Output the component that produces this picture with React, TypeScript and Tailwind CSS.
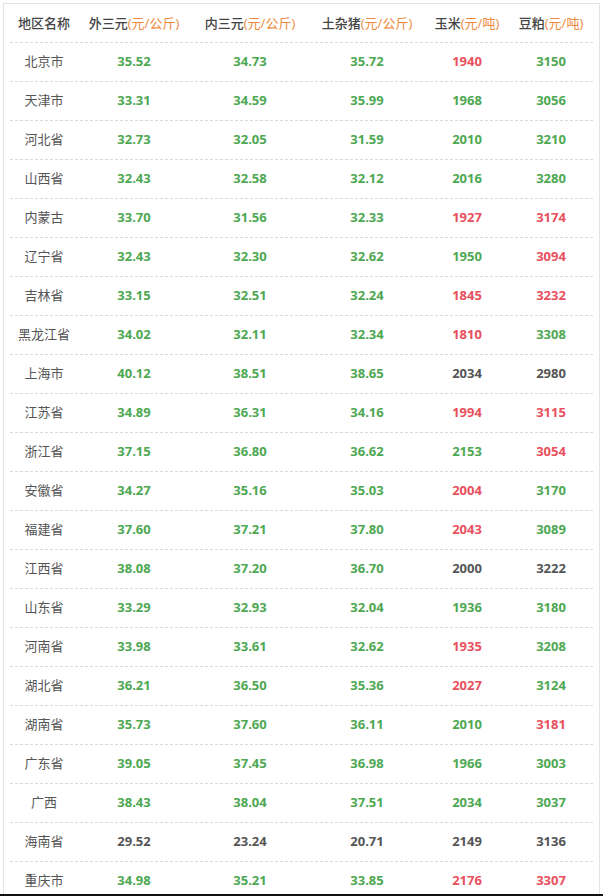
import React from 'react';

// g = green (up), r = red (down), k = flat
type Tone = 'g' | 'r' | 'k';
type Cell = [string, Tone];

const rows: { region: string; cells: Cell[] }[] = [
  { region: '北京市', cells: [['35.52', 'g'], ['34.73', 'g'], ['35.72', 'g'], ['1940', 'r'], ['3150', 'g']] },
  { region: '天津市', cells: [['33.31', 'g'], ['34.59', 'g'], ['35.99', 'g'], ['1968', 'g'], ['3056', 'g']] },
  { region: '河北省', cells: [['32.73', 'g'], ['32.05', 'g'], ['31.59', 'g'], ['2010', 'g'], ['3210', 'g']] },
  { region: '山西省', cells: [['32.43', 'g'], ['32.58', 'g'], ['32.12', 'g'], ['2016', 'g'], ['3280', 'g']] },
  { region: '内蒙古', cells: [['33.70', 'g'], ['31.56', 'g'], ['32.33', 'g'], ['1927', 'r'], ['3174', 'r']] },
  { region: '辽宁省', cells: [['32.43', 'g'], ['32.30', 'g'], ['32.62', 'g'], ['1950', 'g'], ['3094', 'r']] },
  { region: '吉林省', cells: [['33.15', 'g'], ['32.51', 'g'], ['32.24', 'g'], ['1845', 'r'], ['3232', 'r']] },
  { region: '黑龙江省', cells: [['34.02', 'g'], ['32.11', 'g'], ['32.34', 'g'], ['1810', 'r'], ['3308', 'g']] },
  { region: '上海市', cells: [['40.12', 'g'], ['38.51', 'g'], ['38.65', 'g'], ['2034', 'k'], ['2980', 'k']] },
  { region: '江苏省', cells: [['34.89', 'g'], ['36.31', 'g'], ['34.16', 'g'], ['1994', 'r'], ['3115', 'r']] },
  { region: '浙江省', cells: [['37.15', 'g'], ['36.80', 'g'], ['36.62', 'g'], ['2153', 'g'], ['3054', 'r']] },
  { region: '安徽省', cells: [['34.27', 'g'], ['35.16', 'g'], ['35.03', 'g'], ['2004', 'r'], ['3170', 'g']] },
  { region: '福建省', cells: [['37.60', 'g'], ['37.21', 'g'], ['37.80', 'g'], ['2043', 'r'], ['3089', 'g']] },
  { region: '江西省', cells: [['38.08', 'g'], ['37.20', 'g'], ['36.70', 'g'], ['2000', 'k'], ['3222', 'k']] },
  { region: '山东省', cells: [['33.29', 'g'], ['32.93', 'g'], ['32.04', 'g'], ['1936', 'g'], ['3180', 'g']] },
  { region: '河南省', cells: [['33.98', 'g'], ['33.61', 'g'], ['32.62', 'g'], ['1935', 'r'], ['3208', 'g']] },
  { region: '湖北省', cells: [['36.21', 'g'], ['36.50', 'g'], ['35.36', 'g'], ['2027', 'r'], ['3124', 'g']] },
  { region: '湖南省', cells: [['35.73', 'g'], ['37.60', 'g'], ['36.11', 'g'], ['2010', 'g'], ['3181', 'r']] },
  { region: '广东省', cells: [['39.05', 'g'], ['37.45', 'g'], ['36.98', 'g'], ['1966', 'g'], ['3003', 'g']] },
  { region: '广西', cells: [['38.43', 'g'], ['38.04', 'g'], ['37.51', 'g'], ['2034', 'g'], ['3037', 'g']] },
  { region: '海南省', cells: [['29.52', 'k'], ['23.24', 'k'], ['20.71', 'k'], ['2149', 'k'], ['3136', 'k']] },
  { region: '重庆市', cells: [['34.98', 'g'], ['35.21', 'g'], ['33.85', 'g'], ['2176', 'r'], ['3307', 'r']] },
];

const headers: [string, string][] = [
  ['外三元', '(元/公斤)'],
  ['内三元', '(元/公斤)'],
  ['土杂猪', '(元/公斤)'],
  ['玉米', '(元/吨)'],
  ['豆粕', '(元/吨)'],
];

const toneClass: Record<Tone, string> = {
  g: 'text-[#4ea852]',
  r: 'text-[#e8505d]',
  k: 'text-[#555555]',
};

const gridCols = 'grid grid-cols-[68px_112px_120px_114px_86px_82px]';

export default function App() {
  return (
    <div
      className="min-h-screen bg-white p-[3px] pb-0"
      style={{ fontFamily: '"Open Sans", "Noto Sans CJK SC", sans-serif' }}
    >
      <div className="border border-b-0 border-[#e3e3e3] px-[6px] text-[13px]">
        {/* Header */}
        <div className={`${gridCols} h-[39px] items-center border-b border-dashed border-[#d9d9d9] pt-px text-center`}>
          <div className="font-medium text-[#444444]">地区名称</div>
          {headers.map(([name, unit]) => (
            <div key={name} className="whitespace-nowrap">
              <span className="font-medium text-[#444444]">{name}</span>
              <span className="text-[#f0883a]">{unit}</span>
            </div>
          ))}
        </div>

        {/* Rows */}
        {rows.map((row) => (
          <div
            key={row.region}
            className={`${gridCols} h-[39px] items-center border-b border-dashed border-[#d9d9d9] text-center`}
          >
            <div className="text-[#555555]">{row.region}</div>
            {row.cells.map(([value, tone], i) => (
              <div key={i} className={`font-bold ${toneClass[tone]}`}>
                {value}
              </div>
            ))}
          </div>
        ))}
      </div>
      <div className="fixed bottom-0 left-0 right-0 h-[2px] bg-[#111111]" />
    </div>
  );
}
